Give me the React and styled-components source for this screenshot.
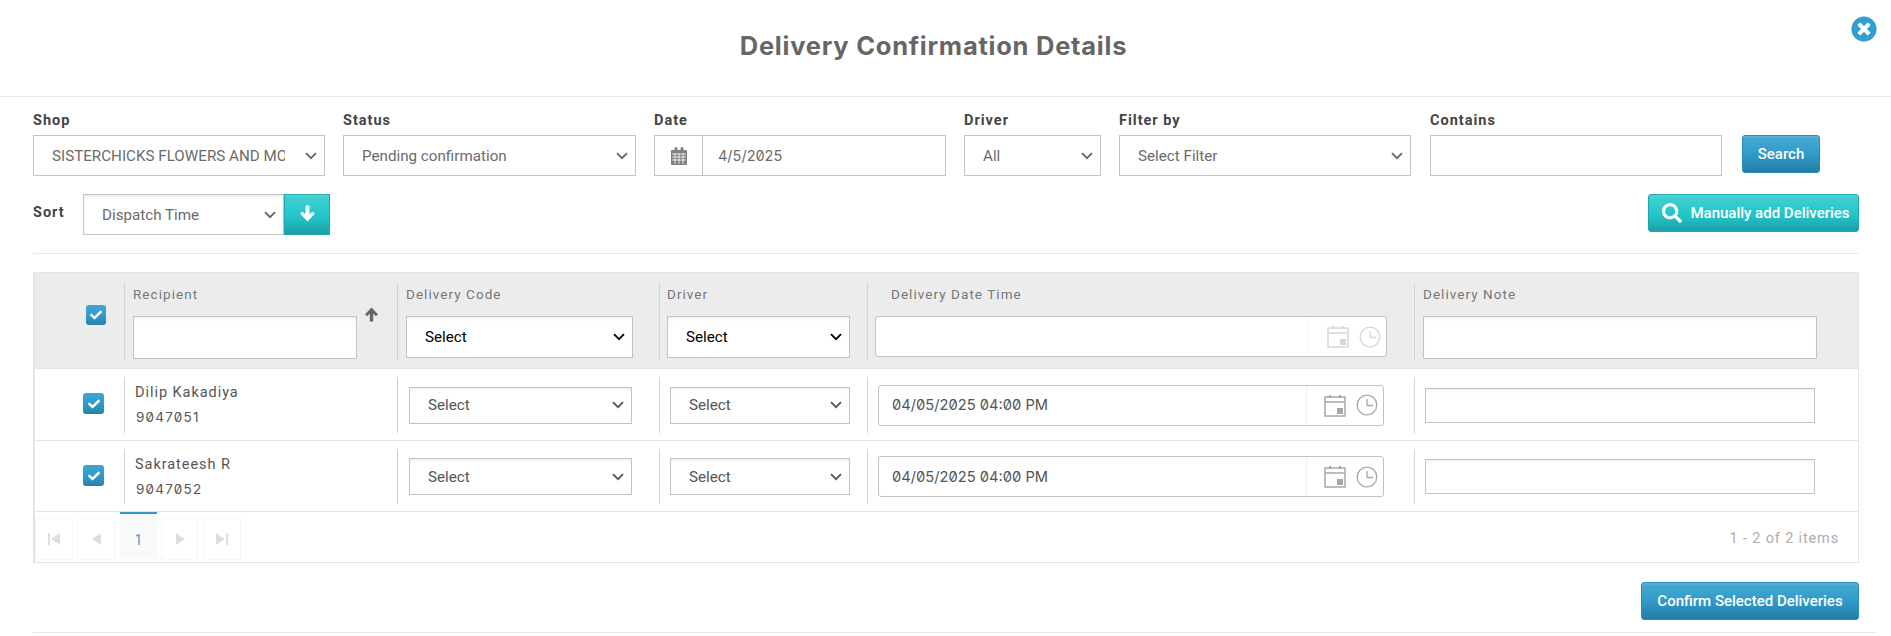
import React from "react";
import styled, { createGlobalStyle, css } from "styled-components";
import { FaTimesCircle, FaSearch, FaCheck } from "react-icons/fa";

const Global = createGlobalStyle`
  html, body { margin: 0; padding: 0; background: #fff; }
  body { font-family: Roboto, "Liberation Sans", sans-serif; color: #555; }
  * { box-sizing: border-box; }
`;

const chevron = (color) =>
  `url("data:image/svg+xml,%3Csvg xmlns='http://www.w3.org/2000/svg' width='12' height='8' viewBox='0 0 12 8'%3E%3Cpath d='M1 1.2l5 5 5-5' fill='none' stroke='${color}' stroke-width='1.8'/%3E%3C/svg%3E")`;

const Page = styled.div`
  width: 1891px;
  height: 636px;
  overflow: hidden;
  background: #fff;
`;
const TitleBar = styled.header`
  position: relative;
  height: 97px;
  border-bottom: 1px solid #e6e6e6;
  display: flex;
  align-items: center;
  justify-content: center;
  padding: 0 24px 6px 0;
`;
const Title = styled.h1`
  margin: 0;
  font-family: Inter, sans-serif;
  font-size: 25.5px;
  font-weight: 700;
  color: #666;
  letter-spacing: 0.75px;
`;
const Close = styled.button`
  position: absolute;
  top: 15px;
  left: 1851px;
  width: 26px;
  height: 28px;
  border: 0;
  padding: 0;
  background: none;
  color: #32a0cf;
  line-height: 0;
  svg { width: 26px; height: 28px; }
`;
const Content = styled.main`
  padding: 0 32px 0 33px;
`;
const FilterRow = styled.section`
  display: flex;
  align-items: flex-end;
  padding-top: 14px;
`;
const Field = styled.div`
  width: ${(p) => p.$w}px;
  margin-right: ${(p) => p.$gap}px;
  display: flex;
  flex-direction: column;
`;
const labelText = css`
  font-size: 14.5px;
  font-weight: 700;
  color: #444;
  letter-spacing: 1px;
`;
const FieldLabel = styled.label`
  ${labelText}
  line-height: 20px;
  height: 24px;
`;
const controlBase = css`
  height: 41px;
  border: 1px solid #c4c4c4;
  background-color: #fff;
  font-family: Roboto, sans-serif;
  font-size: 15.2px;
  color: #6b6b6b;
  border-radius: 0;
  outline: none;
`;
const selectChrome = css`
  appearance: none;
  background-repeat: no-repeat;
  background-position: right 7px center;
  padding: 0 39px 0 18px;
`;
const FilterSelect = styled.select`
  ${controlBase}
  ${selectChrome}
  width: 100%;
  background-image: ${chevron("%23666")};
`;
const TextInput = styled.input`
  ${controlBase}
  width: 100%;
`;
const DateGroup = styled.div`
  ${controlBase}
  display: flex;
  align-items: stretch;
`;
const DateAddon = styled.span`
  width: 48px;
  border-right: 1px solid #c4c4c4;
  display: flex;
  align-items: center;
  justify-content: center;
`;
const DateValue = styled.span`
  display: flex;
  align-items: center;
  padding-left: 15px;
  font-family: Inter, sans-serif;
  font-size: 14.5px;
  font-variant-numeric: slashed-zero;
`;
const gradBlue = "linear-gradient(#5fb4d9 0, #45a8d2 3px, #2f9ac9 50%, #2b8fbc 70%, #257ca4 100%)";
const gradTeal = "linear-gradient(#52d6d8 0, #3ed0d2 3px, #22c5c9 55%, #1fb6ba 75%, #1c9ea6 100%)";
const Button = styled.button`
  border: 1px solid ${(p) => (p.$teal ? "#1ea8ad" : "#2a8cb8")};
  border-radius: 3px;
  background: ${(p) => (p.$teal ? gradTeal : gradBlue)};
  color: #fff;
  font-family: Roboto, sans-serif;
  font-size: 15px;
  font-weight: 500;
  padding: 0;
  display: inline-flex;
  align-items: center;
  justify-content: center;
`;
const SearchButton = styled(Button)`
  width: 78px;
  height: 38px;
  margin-bottom: 3px;
`;
const SortRow = styled.section`
  display: flex;
  align-items: flex-start;
  padding-top: 18px;
  height: 78px;
  border-bottom: 1px solid #e9e9e9;
`;
const SortLabel = styled.label`
  ${labelText}
  width: 50px;
  line-height: 38px;
`;
const SortSelect = styled.select`
  ${controlBase}
  ${selectChrome}
  width: 201px;
  background-image: ${chevron("%23666")};
  box-shadow: inset 0 3px 4px -2px rgba(0, 0, 0, 0.1);
`;
const SortButton = styled(Button)`
  width: 46px;
  height: 41px;
  border-radius: 0;
  padding-bottom: 3px;
`;
const AddButton = styled(Button)`
  margin-left: auto;
  width: 211px;
  height: 38px;
  gap: 8px;
  padding-left: 5px;
  svg { font-size: 20px; }
`;
const GridBox = styled.section`
  margin-top: 18px;
  border: 1px solid #e4e4e4;
  border-left-width: 2px;
`;
const columns = "89px 273px 262px 208px 547px 1fr";
const HeadRow = styled.div`
  display: grid;
  grid-template-columns: ${columns};
  background: #ececec;
  padding: 10px 0 8px;
  height: 96px;
  border-bottom: 1px solid #e4e4e4;
`;
const BodyRow = styled.div`
  display: grid;
  grid-template-columns: ${columns};
  padding: 8px 0 7px;
  height: ${(p) => p.$h}px;
  border-bottom: 1px solid #e4e4e4;
`;
const CheckCell = styled.div`
  display: flex;
  justify-content: center;
  padding-left: ${(p) => (p.$head ? 32 : 28)}px;
  padding-top: ${(p) => (p.$head ? 22 : 16)}px;
`;
const Check = styled.span`
  width: ${(p) => (p.$head ? 20 : 21)}px;
  height: ${(p) => (p.$head ? 20 : 21)}px;
  border-radius: 3px;
  background: linear-gradient(#3fa6d2, #2f9ac9 55%, #2580a9);
  color: #fff;
  display: flex;
  align-items: center;
  justify-content: center;
  font-size: 12px;
`;
const HeadCell = styled.div`
  border-left: 1px solid ${(p) => (p.$strong ? "#cfcfcf" : "#d6d6d6")};
  padding-left: ${(p) => p.$pad}px;
  display: flex;
  flex-direction: column;
`;
const HeadLabel = styled.span`
  height: 33px;
  line-height: 22px;
  font-size: 13.5px;
  letter-spacing: 1.05px;
  color: #777;
  padding-left: ${(p) => p.$indent || 0}px;
`;
const HeadControls = styled.div`
  display: flex;
  align-items: flex-start;
`;
const GridInput = styled.input`
  width: ${(p) => p.$w}px;
  height: ${(p) => p.$h}px;
  border: 1px solid #c2c2c2;
  background: #fff;
  box-shadow: inset 0 3px 4px -2px rgba(0, 0, 0, 0.08);
  outline: none;
  border-radius: 0;
`;
const GridSelect = styled.select`
  ${selectChrome}
  width: ${(p) => p.$w}px;
  height: ${(p) => p.$h}px;
  border: 1px solid #c2c2c2;
  border-radius: 0;
  background-color: #fff;
  background-image: ${(p) => (p.$dark ? chevron("%23000") : chevron("%23555"))};
  font-family: Roboto, sans-serif;
  font-size: 15.2px;
  color: ${(p) => (p.$dark ? "#000" : "#555")};
  outline: none;
  box-shadow: inset 0 3px 4px -2px rgba(0, 0, 0, 0.08);
`;
const SortArrow = styled.svg`
  margin-left: 7px;
  margin-top: -9px;
  width: 15px;
  height: 15px;
  flex: none;
`;
const BodyCell = styled.div`
  border-left: 1px solid ${(p) => (p.$strong ? "#cfcfcf" : "#d6d6d6")};
  padding-left: ${(p) => p.$pad}px;
  display: flex;
  flex-direction: column;
  justify-content: ${(p) => (p.$top ? "flex-start" : "center")};
`;
const Name = styled.div`
  font-size: 14.5px;
  line-height: 25px;
  letter-spacing: 0.95px;
  color: #555;
  padding-top: 3px;
  margin-left: -1px;
`;
const Code = styled.div`
  font-family: Inter, sans-serif;
  font-variant-numeric: slashed-zero;
  font-size: 13.5px;
  line-height: 25px;
  letter-spacing: 1.2px;
  color: #555;
`;
const DateTime = styled.div`
  width: ${(p) => p.$w}px;
  height: ${(p) => p.$h}px;
  border: 1px solid #c2c2c2;
  border-radius: 3px;
  background: #fff;
  display: flex;
`;
const DateTimeText = styled.span`
  flex: 1;
  display: flex;
  align-items: center;
  padding-left: 13px;
  font-family: Inter, sans-serif;
  font-variant-numeric: slashed-zero;
  font-size: 14.7px;
  color: #555;
`;
const DateTimeIcons = styled.span`
  width: ${(p) => p.$w}px;
  border-left: 1px solid #f1f1f1;
  display: flex;
  align-items: center;
  justify-content: flex-end;
  padding-right: 5px;
  gap: 10px;
  opacity: ${(p) => (p.$faint ? 0.45 : 1)};
`;
const Pager = styled.nav`
  height: 50px;
  display: flex;
  align-items: flex-start;
`;
const PageButton = styled.span`
  width: ${(p) => p.$w}px;
  height: 42px;
  margin: 6px 5px 0 0;
  border: 1px solid #f7f7f7;
  display: flex;
  align-items: center;
  justify-content: center;
`;
const PageCurrent = styled.span`
  width: 37px;
  height: 47px;
  margin-right: 4px;
  padding-top: 6px;
  border-top: 2px solid #2f9ac9;
  background: #f9f9f9;
  color: #3d9fcb;
  font-size: 14px;
  display: flex;
  align-items: center;
  justify-content: center;
`;
const PagerInfo = styled.span`
  margin-left: auto;
  margin-right: 19px;
  line-height: 54px;
  font-size: 14.5px;
  letter-spacing: 0.85px;
  color: #adadad;
`;
const Footer = styled.footer`
  display: flex;
  justify-content: flex-end;
  padding-top: 19px;
`;
const ConfirmButton = styled(Button)`
  width: 218px;
  height: 38px;
`;
const BottomRule = styled.div`
  height: 1px;
  background: #e9e9e9;
  margin: 12px 14px 0 33px;
`;

const CalendarSolid = () => (
  <svg width="16" height="18" viewBox="0 0 16 18">
    <path fill="#808080" d="M1 3h2.5V1.5a1 1 0 0 1 3 0V3h3V1.5a1 1 0 0 1 3 0V3H15a1 1 0 0 1 1 1v13a1 1 0 0 1-1 1H1a1 1 0 0 1-1-1V4a1 1 0 0 1 1-1z" />
    <path stroke="#fff" strokeWidth="0.8" d="M1 7h14M1 10h14M1 13h14M4 6v11M8 6v11M12 6v11" />
  </svg>
);
const CalendarLine = () => (
  <svg width="22" height="23" viewBox="0 0 22 23" fill="none">
    <rect x="1" y="3" width="20" height="19" stroke="#a8a8a8" strokeWidth="1.5" />
    <path d="M1 8h20" stroke="#a8a8a8" strokeWidth="1.5" />
    <path d="M6 1v3M16 1v3" stroke="#a8a8a8" strokeWidth="2" />
    <rect x="13" y="14" width="6" height="6" fill="#a8a8a8" />
  </svg>
);
const Clock = () => (
  <svg width="22" height="22" viewBox="0 0 22 22" fill="none">
    <circle cx="11" cy="11" r="9.8" stroke="#a8a8a8" strokeWidth="1.3" />
    <path d="M11 5v6.5h6" stroke="#a8a8a8" strokeWidth="1.3" />
  </svg>
);
const BoldArrow = ({ color = "#fff", down }) => (
  <svg width="17" height="17" viewBox="0 0 15 15" style={{ transform: down ? "rotate(180deg)" : "none" }}>
    <path fill={color} d="M7.5 0.5L14 7.2l-2.2 2.1-2.6-2.7V14.5H5.8V6.6L3.2 9.3 1 7.2z" />
  </svg>
);
const Triangle = ({ dir, bar }) => (
  <svg width="12" height="12" viewBox="0 0 12 12" style={{ transform: dir === "right" ? "scaleX(-1)" : "none" }}>
    <path fill="#dedede" d={bar ? "M12 0v12L3 6z" : "M10 0v12L1 6z"} />
    {bar && <rect x="0" y="0" width="2" height="12" fill="#dedede" />}
  </svg>
);
const DateTimeField = ({ value, w, h, iconW, faint }) => (
  <DateTime $w={w} $h={h}>
    <DateTimeText>{value}</DateTimeText>
    <DateTimeIcons $w={iconW} $faint={faint}>
      <CalendarLine />
      <Clock />
    </DateTimeIcons>
  </DateTime>
);

const rows = [
  { name: "Dilip Kakadiya", code: "9047051", h: 72 },
  { name: "Sakrateesh R", code: "9047052", h: 71 },
];

export default function App() {
  return (
    <Page>
      <Global />
      <TitleBar>
        <Title>Delivery Confirmation Details</Title>
        <Close aria-label="Close"><FaTimesCircle /></Close>
      </TitleBar>
      <Content>
        <FilterRow>
          <Field $w={292} $gap={18}>
            <FieldLabel>Shop</FieldLabel>
            <FilterSelect><option>SISTERCHICKS FLOWERS AND MORE</option></FilterSelect>
          </Field>
          <Field $w={293} $gap={18}>
            <FieldLabel>Status</FieldLabel>
            <FilterSelect><option>Pending confirmation</option></FilterSelect>
          </Field>
          <Field $w={292} $gap={18}>
            <FieldLabel>Date</FieldLabel>
            <DateGroup>
              <DateAddon><CalendarSolid /></DateAddon>
              <DateValue>4/5/2025</DateValue>
            </DateGroup>
          </Field>
          <Field $w={137} $gap={18}>
            <FieldLabel>Driver</FieldLabel>
            <FilterSelect><option>All</option></FilterSelect>
          </Field>
          <Field $w={292} $gap={19}>
            <FieldLabel>Filter by</FieldLabel>
            <FilterSelect><option>Select Filter</option></FilterSelect>
          </Field>
          <Field $w={292} $gap={20}>
            <FieldLabel>Contains</FieldLabel>
            <TextInput />
          </Field>
          <SearchButton>Search</SearchButton>
        </FilterRow>
        <SortRow>
          <SortLabel>Sort</SortLabel>
          <SortSelect><option>Dispatch Time</option></SortSelect>
          <SortButton $teal><BoldArrow down /></SortButton>
          <AddButton $teal><FaSearch />Manually add Deliveries</AddButton>
        </SortRow>
        <GridBox>
          <HeadRow>
            <CheckCell $head><Check $head><FaCheck /></Check></CheckCell>
            <HeadCell $pad={8}>
              <HeadLabel>Recipient</HeadLabel>
              <HeadControls>
                <GridInput $w={224} $h={43} />
                <SortArrow viewBox="0 0 15 15">
                  <path fill="#666" d="M7.5 0.5L14 7.2l-2.2 2.1-2.6-2.7V14.5H5.8V6.6L3.2 9.3 1 7.2z" />
                </SortArrow>
              </HeadControls>
            </HeadCell>
            <HeadCell $pad={8} $strong>
              <HeadLabel>Delivery Code</HeadLabel>
              <GridSelect $w={227} $h={42} $dark><option>Select</option></GridSelect>
            </HeadCell>
            <HeadCell $pad={7}>
              <HeadLabel>Driver</HeadLabel>
              <GridSelect $w={183} $h={42} $dark><option>Select</option></GridSelect>
            </HeadCell>
            <HeadCell $pad={7}>
              <HeadLabel $indent={16}>Delivery Date Time</HeadLabel>
              <DateTimeField value="" w={512} h={41} iconW={78} faint />
            </HeadCell>
            <HeadCell $pad={8}>
              <HeadLabel>Delivery Note</HeadLabel>
              <GridInput $w={394} $h={43} />
            </HeadCell>
          </HeadRow>
          {rows.map((r) => (
            <BodyRow key={r.code} $h={r.h}>
              <CheckCell><Check><FaCheck /></Check></CheckCell>
              <BodyCell $pad={11} $top>
                <Name>{r.name}</Name>
                <Code>{r.code}</Code>
              </BodyCell>
              <BodyCell $pad={11} $strong>
                <GridSelect $w={223} $h={37}><option>Select</option></GridSelect>
              </BodyCell>
              <BodyCell $pad={10}>
                <GridSelect $w={180} $h={37}><option>Select</option></GridSelect>
              </BodyCell>
              <BodyCell $pad={10}>
                <DateTimeField value="04/05/2025 04:00 PM" w={506} h={41} iconW={77} />
              </BodyCell>
              <BodyCell $pad={10}>
                <GridInput $w={390} $h={35} />
              </BodyCell>
            </BodyRow>
          ))}
          <Pager>
            <PageButton $w={38}><Triangle bar /></PageButton>
            <PageButton $w={37}><Triangle /></PageButton>
            <PageCurrent>1</PageCurrent>
            <PageButton $w={37}><Triangle dir="right" /></PageButton>
            <PageButton $w={38}><Triangle dir="right" bar /></PageButton>
            <PagerInfo>1 - 2 of 2 items</PagerInfo>
          </Pager>
        </GridBox>
        <Footer>
          <ConfirmButton>Confirm Selected Deliveries</ConfirmButton>
        </Footer>
      </Content>
      <BottomRule />
    </Page>
  );
}
